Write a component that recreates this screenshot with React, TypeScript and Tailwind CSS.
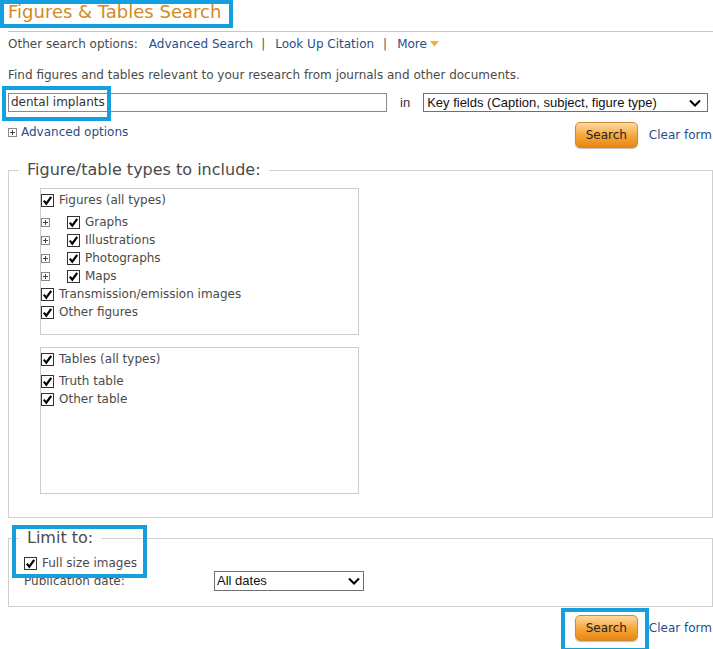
import React from 'react'

function CheckBox() {
  return (
    <svg width="13" height="13" viewBox="0 0 13 13" className="shrink-0">
      <rect x="0.5" y="0.5" width="12" height="12" fill="#fff" stroke="#333" />
      <path d="M2.8 6.6 L5.3 9.6 L10.2 2.8" fill="none" stroke="#000" strokeWidth="2.2" />
    </svg>
  )
}

function PlusBox() {
  return (
    <svg width="9" height="9" viewBox="0 0 9 9" className="shrink-0">
      <rect x="0.5" y="0.5" width="8" height="8" fill="#fff" stroke="#888" />
      <path d="M2 4.5 H7 M4.5 2 V7" stroke="#444" strokeWidth="1" />
    </svg>
  )
}

function Chevron() {
  return (
    <svg width="12" height="8" viewBox="0 0 12 8">
      <path d="M1 1.5 L6 6.5 L11 1.5" fill="none" stroke="#000" strokeWidth="2" />
    </svg>
  )
}

function SearchButton() {
  return (
    <button className="w-[63px] h-[26px] rounded-[5px] border border-[#cf8a33] bg-gradient-to-b from-[#fcd9a0] via-[#f6a93c] to-[#e9860f] text-[12px] text-[#222] shadow-[0_1px_1px_rgba(0,0,0,0.25)]">
      Search
    </button>
  )
}

function Item({ label, sub }: { label: string; sub?: boolean }) {
  if (sub) {
    return (
      <div className="flex items-center h-[18px]">
        <PlusBox />
        <span className="ml-[17px]">
          <CheckBox />
        </span>
        <span className="ml-[5px]">{label}</span>
      </div>
    )
  }
  return (
    <div className="flex items-center h-[18px]">
      <CheckBox />
      <span className="ml-[5px]">{label}</span>
    </div>
  )
}

export default function App() {
  return (
    <div className="relative w-[713px] h-[649px] overflow-hidden bg-white font-['DejaVu_Sans',sans-serif] text-[12px] text-[#4a4a4a]">
      <h1 className="pl-2 h-[31px] pt-[0px] text-[18px] leading-[24px] text-[#d4891e]">Figures &amp; Tables Search</h1>
      <div className="ml-2 border-t border-[#c8c8c8]" />

      <div className="mt-[4px] ml-2 flex items-center h-[16px] leading-[16px]">
        <span>Other search options:</span>
        <a className="ml-[11px] text-[#1f4e8c]">Advanced Search</a>
        <span className="ml-[8px] text-[#555]">|</span>
        <a className="ml-[10px] text-[#1f4e8c]">Look Up Citation</a>
        <span className="ml-[9px] text-[#555]">|</span>
        <a className="ml-[10px] text-[#1f4e8c]">More</a>
        <svg width="9" height="6" viewBox="0 0 9 6" className="ml-[3px]">
          <path d="M0 0 H9 L4.5 5.5 Z" fill="#f2b134" />
        </svg>
      </div>

      <p className="mt-[15px] ml-2 h-[16px] leading-[16px]">
        Find figures and tables relevant to your research from journals and other documents.
      </p>

      <div className="mt-[10px] ml-2 flex items-center h-[19px]">
        <div className="w-[379px] h-[19px] border border-[#8a8a8a] pl-[2px] leading-[17px] text-[#333]">
          dental implants
        </div>
        <span className="ml-[13px] font-['Liberation_Sans',sans-serif] text-[13px] text-[#333]">in</span>
        <div className="ml-[13px] w-[285px] h-[19px] border border-[#707070] flex items-center justify-between pl-[3px] pr-[6px] font-['Liberation_Sans',sans-serif] text-[13px] text-[#111]">
          <span>Key fields (Caption, subject, figure type)</span>
          <Chevron />
        </div>
      </div>

      <div className="mt-[10px] ml-2 flex justify-between items-start h-[27px]">
        <div className="mt-[2px] flex items-center h-[16px]">
          <PlusBox />
          <a className="ml-[4px] text-[#1f4e8c]">Advanced options</a>
        </div>
        <div className="flex items-center">
          <SearchButton />
          <a className="ml-[11px] mr-[1px] text-[#1f4e8c]">Clear form</a>
        </div>
      </div>

      <fieldset className="mt-[11px] ml-2 border border-[#cfcfcf] pb-[23px]">
        <legend className="ml-[10px] px-2 text-[16px] leading-[20px] text-[#4a4a4a]">Figure/table types to include:</legend>
        <div className="mt-[8px] ml-[31px] w-[319px] h-[147px] border border-[#cccccc] pt-[2px] leading-[18px]">
          <div className="mb-[4px]">
            <Item label="Figures (all types)" />
          </div>
          <Item label="Graphs" sub />
          <Item label="Illustrations" sub />
          <Item label="Photographs" sub />
          <Item label="Maps" sub />
          <Item label="Transmission/emission images" />
          <Item label="Other figures" />
        </div>
        <div className="mt-[12px] ml-[31px] w-[319px] h-[147px] border border-[#cccccc] pt-[2px] leading-[18px]">
          <div className="mb-[4px]">
            <Item label="Tables (all types)" />
          </div>
          <Item label="Truth table" />
          <Item label="Other table" />
        </div>
      </fieldset>

      <fieldset className="mt-[10px] ml-2 border border-[#cfcfcf] pb-[15px]">
        <legend className="ml-[10px] px-2 text-[16px] leading-[20px] text-[#4a4a4a]">Limit to:</legend>
        <div className="mt-[7px] ml-[15px] flex items-center h-[16px]">
          <CheckBox />
          <span className="ml-[5px]">Full size images</span>
        </div>
        <div className="ml-[15px] flex items-center h-[20px]">
          <span className="w-[190px]">Publication date:</span>
          <div className="w-[150px] h-[20px] border border-[#707070] flex items-center justify-between pl-[2px] pr-[3px] font-['Liberation_Sans',sans-serif] text-[13px] text-[#111]">
            <span>All dates</span>
            <Chevron />
          </div>
        </div>
      </fieldset>

      <div className="mt-[8px] flex justify-end items-center">
        <SearchButton />
        <a className="ml-[11px] mr-[1px] text-[#1f4e8c]">Clear form</a>
      </div>

      {/* highlight annotations */}
      <div className="absolute left-0 top-0 w-[233px] h-[28px] border-[4px] border-[#14a0de]" />
      <div className="absolute left-[2px] top-[86px] w-[109px] h-[35px] border-[4px] border-[#14a0de]" />
      <div className="absolute left-[12px] top-[525px] w-[135px] h-[53px] border-[4px] border-[#14a0de]" />
      <div className="absolute left-[561px] top-[608px] w-[88px] h-[44px] border-[4px] border-[#14a0de]" />
    </div>
  )
}
